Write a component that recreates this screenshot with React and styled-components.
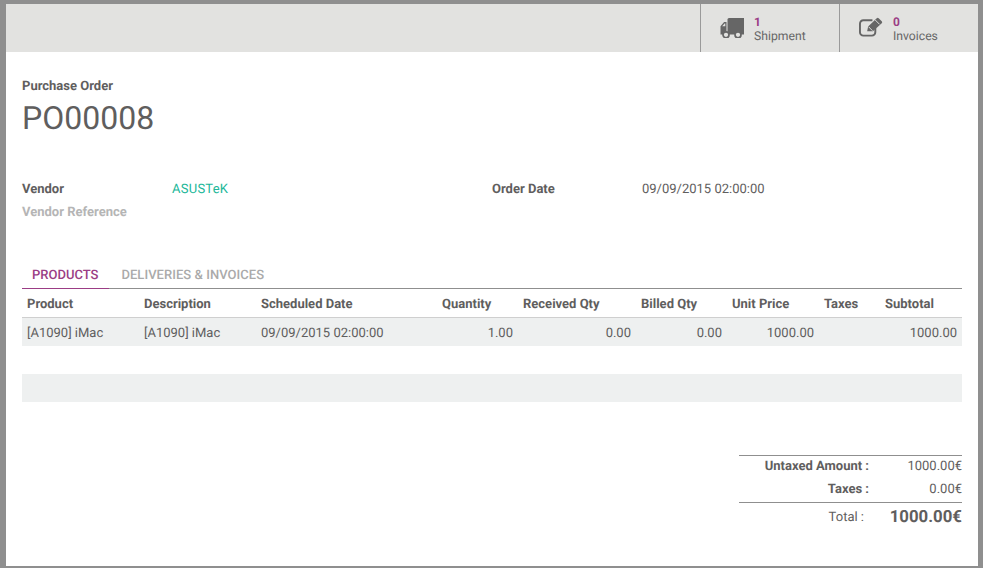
import React from "react";
import styled, { createGlobalStyle } from "styled-components";

const Global = createGlobalStyle`
  html, body { margin: 0; padding: 0; background: #8f8f8f; }
  body { font-family: Roboto, "Liberation Sans", sans-serif; font-size: 13px; color: #5f5e5e; text-rendering: geometricPrecision; }
  * { box-sizing: border-box; }
`;

const Frame = styled.div`
  width: 983px; height: 568px; padding: 4px 5px 2px 6px; background: #8f8f8f; overflow: hidden;
`;
const Sheet = styled.div`
  height: 100%; background: #fff; display: flex; flex-direction: column;
`;
const ButtonBox = styled.div`
  height: 48px; background: #e2e2e0; display: flex; justify-content: flex-end; flex: none;
`;
const StatButton = styled.div`
  width: 139px; border-left: 1px solid #9a9a9a; display: flex; align-items: center; padding-left: 19px; gap: 10px;
  color: #666;
`;
const StatText = styled.div`
  display: flex; flex-direction: column; line-height: 14px; padding-top: 1px; font-size: 12.2px;
`;
const StatValue = styled.span`
  color: #9b3d85; font-weight: 700; font-size: 12px;
`;
const Body = styled.div`
  padding: 0 16px; display: flex; flex-direction: column; flex: 1;
`;
const Kicker = styled.div`
  margin-top: 27px; font-weight: 700; font-size: 13px; line-height: 15px;
`;
const Title = styled.h1`
  margin: 5px 0 0; font-weight: 400; font-size: 32px; line-height: 38px; color: #5f5e5e;
`;
const Fields = styled.div`
  margin-top: 41px; display: grid; grid-template-columns: 150px 320px 150px 1fr; grid-auto-rows: 23px; align-items: center;
`;
const Label = styled.div`
  font-weight: 700; color: ${p => (p.$muted ? "#b5b5b5" : "#5f5e5e")};
`;
const Link = styled.a`
  color: #21b799; text-decoration: none; letter-spacing: 0.25px;
`;
const Tabs = styled.div`
  margin-top: 41px; display: flex; height: 24px; border-bottom: 1px solid #8f8f8f; flex: none;
`;
const Tab = styled.div`
  padding: 0 11px 0 10px; margin-right: 2px; height: 24px; line-height: 21px; font-size: 13px; font-weight: 500;
  letter-spacing: ${p => (p.$active ? "0" : "0.05px")};
  color: ${p => (p.$active ? "#9b3d85" : "#aaa")};
  border-bottom: 1px solid ${p => (p.$active ? "#9b3d85" : "transparent")};
`;
const Table = styled.table`
  width: 940px; table-layout: fixed; border-collapse: separate; border-spacing: 0; flex: none;
`;
const Th = styled.th`
  height: 29px; padding: 3px 5px 0; text-align: left; font-weight: 700; border-bottom: 1px solid #cfcfcf; font-size: 13px;
`;
const Td = styled.td`
  height: 28px; padding: 2px 5px 0; background: #eef0f0; white-space: nowrap;
  text-align: ${p => (p.$num ? "right" : "left")};
`;
const Spacer = styled.td`
  height: 28px; padding: 0;
`;
const FootCell = styled.td`
  height: 28px; padding: 0; background: #eef0f0;
`;
const Totals = styled.div`
  margin: 53px 0 0 auto; width: 223px; border-top: 1px solid #8f8f8f; flex: none;
`;
const TotalRow = styled.div`
  display: grid; grid-template-columns: 130px 1fr; height: 23px; padding-bottom: 2px; align-items: center; text-align: right;
`;
const TotalLabel = styled.div`
  font-weight: 700;
`;
const GrandRow = styled.div`
  display: grid; grid-template-columns: 125px 1fr; height: 27px; padding-top: 2px; border-top: 1px solid #8f8f8f; align-items: center; text-align: right;
`;
const GrandValue = styled.div`
  font-weight: 700; font-size: 16.8px;
`;
const IconSvg = styled.svg`
  width: ${p => p.$w}px; height: 20px; flex: none; color: #666; margin-top: ${p => p.$top}px;
`;

const TruckIcon = () => (
  <IconSvg viewBox="0 0 24 20" $w={24} $top={0}>
    <path fill="currentColor" d="M7.5 1.5Q7.5 0 9 0H24v16.5H7.5z" />
    <path fill="currentColor" fillRule="evenodd" d="M6.5 4H4.1L.5 8.2V16.5h6zM5.3 5.4H4.6L2.2 8.2h3.1z" />
    <circle cx="6" cy="16.8" r="3" fill="#e2e2e0" stroke="currentColor" strokeWidth="1.7" />
    <circle cx="18" cy="16.8" r="3" fill="#e2e2e0" stroke="currentColor" strokeWidth="1.7" />
  </IconSvg>
);

const EditIcon = () => (
  <IconSvg viewBox="0 0 25 20" $w={24} $top={-2}>
    <path fill="none" stroke="currentColor" strokeWidth="2" d="M14 3H4.5A3.5 3.5 0 0 0 1 6.5v9A3.5 3.5 0 0 0 4.5 19h9a3.5 3.5 0 0 0 3.5-3.5V11" />
    <path fill="currentColor" d="M8.5 14.5l1-5L18.5.8q1-1 2 0l3.2 3.2q1 1 0 2L14.5 14.5z" />
    <path fill="none" stroke="#e2e2e0" strokeWidth="1" d="M16.8 2.6l4.6 4.6M10 9.8l4 4" />
  </IconSvg>
);

const cols = [117, 117, 181, 81, 118, 91, 92, 61, 82];
const heads = ["Product", "Description", "Scheduled Date", "Quantity", "Received Qty", "Billed Qty", "Unit Price", "Taxes", "Subtotal"];

export default function App() {
  return (
    <Frame>
      <Global />
      <Sheet>
        <ButtonBox>
          <StatButton>
            <TruckIcon />
            <StatText><StatValue>1</StatValue><span>Shipment</span></StatText>
          </StatButton>
          <StatButton>
            <EditIcon />
            <StatText><StatValue>0</StatValue><span>Invoices</span></StatText>
          </StatButton>
        </ButtonBox>
        <Body>
          <Kicker>Purchase Order</Kicker>
          <Title>PO00008</Title>
          <Fields>
            <Label>Vendor</Label>
            <Link>ASUSTeK</Link>
            <Label>Order Date</Label>
            <div>09/09/2015 02:00:00</div>
            <Label $muted>Vendor Reference</Label>
          </Fields>
          <Tabs>
            <Tab $active>PRODUCTS</Tab>
            <Tab>DELIVERIES &amp; INVOICES</Tab>
          </Tabs>
          <Table>
            <colgroup>{cols.map((w, i) => <col key={i} width={w} />)}</colgroup>
            <thead><tr>{heads.map(h => <Th key={h}>{h}</Th>)}</tr></thead>
            <tbody>
              <tr>
                <Td>[A1090] iMac</Td>
                <Td>[A1090] iMac</Td>
                <Td>09/09/2015 02:00:00</Td>
                <Td $num>1.00</Td>
                <Td $num>0.00</Td>
                <Td $num>0.00</Td>
                <Td $num>1000.00</Td>
                <Td />
                <Td $num>1000.00</Td>
              </tr>
              <tr><Spacer colSpan={9} /></tr>
            </tbody>
            <tfoot><tr><FootCell colSpan={9} /></tr></tfoot>
          </Table>
          <Totals>
            <TotalRow><TotalLabel>Untaxed Amount :</TotalLabel><div>1000.00€</div></TotalRow>
            <TotalRow><TotalLabel>Taxes :</TotalLabel><div>0.00€</div></TotalRow>
            <GrandRow><div>Total :</div><GrandValue>1000.00€</GrandValue></GrandRow>
          </Totals>
        </Body>
      </Sheet>
    </Frame>
  );
}
